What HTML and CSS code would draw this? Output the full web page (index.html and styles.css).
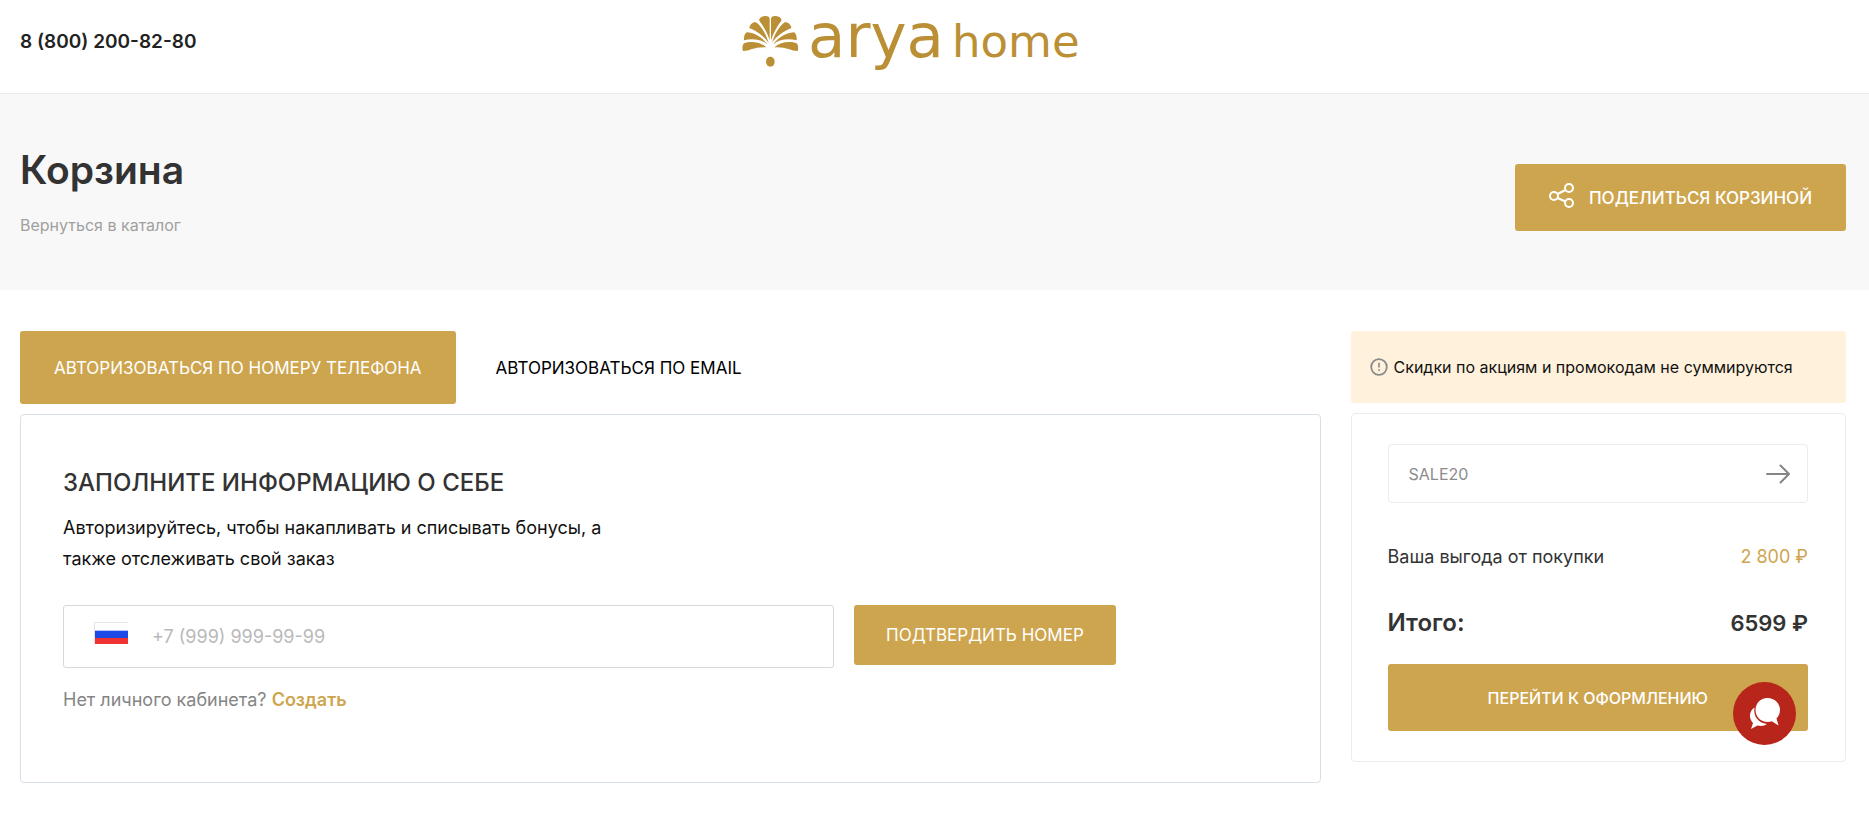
FILE: index.html
```html
<!DOCTYPE html>
<html lang="ru">
<head>
<meta charset="utf-8">
<meta name="viewport" content="width=device-width, initial-scale=1">
<title>Корзина — Arya Home</title>
<link rel="stylesheet" href="styles.css">
</head>
<body>
<header class="header">
  <a class="phone" href="tel:88002008280">8 (800) 200-82-80</a>
  <a class="logo" href="#" aria-label="arya home">
    <svg width="344" height="72" viewBox="0 -14 344 72" fill="#bb8f35">
      <defs>
        <g id="petals">
          <path d="M104 106V41C103 33 93 32 86 34C76 36 71 42 73 47C84 62 97 82 104 106Z"/>
          <path d="M101 113C94 90 80 64 63 52C54 50 44 58 43 69C66 78 87 94 101 113Z"/>
          <path d="M98 119C84 99 62 84 35 82C28 86 26 98 27 106C54 99 82 104 98 119Z"/>
          <path d="M94 127C76 110 46 107 27 115C22 120 21 132 24 138C46 138 56 125 94 127Z"/>
        </g>
      </defs>
      <g transform="translate(-6 -9) scale(.3333)">
        <use href="#petals"/>
        <use href="#petals" transform="translate(212 0) scale(-1 1)"/>
        <ellipse cx="106" cy="170" rx="13" ry="15"/>
      </g>
      <text class="logo-arya" x="67" y="43">arya</text>
      <text class="logo-home" x="211" y="43">home</text>
    </svg>
  </a>
</header>

<section class="hero">
  <div>
    <h1 class="title">Корзина</h1>
    <a class="back" href="#">Вернуться в каталог</a>
  </div>
  <button class="btn share" type="button">
    <svg class="share-icon" width="26" height="26" viewBox="0 0 26 26" fill="none" stroke="#fff" stroke-width="2">
      <circle cx="5" cy="13" r="4"/><circle cx="20" cy="5" r="4"/><circle cx="20" cy="20" r="4"/>
      <path d="M8.500 11L16.500 7M8.500 15L16.500 18.500"/>
    </svg>
    Поделиться корзиной
  </button>
</section>

<main class="content">
  <section>
    <div class="tabs">
      <button class="tab tab-active" type="button">Авторизоваться по номеру телефона</button>
      <button class="tab" type="button">Авторизоваться по email</button>
    </div>
    <form class="card login">
      <h2 class="subtitle">Заполните информацию о себе</h2>
      <p class="lead">Авторизируйтесь, чтобы накапливать и списывать бонусы, а также отслеживать свой заказ</p>
      <div class="row">
        <label class="field">
          <svg class="flag" width="34" height="22" viewBox="0 0 34 22">
            <path fill="#e4e4e4" d="M0 0h34v1H1v21H0z"/>
            <path fill="#fff" d="M1 1h33v7H1z"/>
            <path fill="#b9c3f5" d="M1 8h33v1H1z"/>
            <path fill="#1d49e6" d="M1 9h33v7H1z"/>
            <path fill="#ef3333" d="M1 16h33v6H1z"/>
          </svg>
          <input class="input phone-input" type="tel" placeholder="+7 (999) 999-99-99" aria-label="Номер телефона">
        </label>
        <button class="btn confirm" type="button">Подтвердить номер</button>
      </div>
      <p class="note">Нет личного кабинета? <a class="create" href="#">Создать</a></p>
    </form>
  </section>

  <aside>
    <div class="notice">
      <svg width="18" height="18" viewBox="0 0 18 18" fill="none" stroke="#8a8a8a">
        <circle cx="9" cy="9" r="7.800" stroke-width="1.800"/>
        <path stroke-width="1.600" d="M9 4.800v4.800M9 11.200v1.700"/>
      </svg>
      Скидки по акциям и промокодам не суммируются
    </div>
    <form class="card summary">
      <div class="promo">
        <input class="input promo-input" type="text" placeholder="SALE20" aria-label="Промокод">
        <button class="apply" type="button" aria-label="Применить промокод">
          <svg width="24" height="20" viewBox="0 0 24 20" fill="none" stroke="#858585" stroke-width="2" stroke-linecap="round" stroke-linejoin="round">
            <path d="M1 10H23M14.500 1.500L23 10L14.500 18.500"/>
          </svg>
        </button>
      </div>
      <div class="line"><span>Ваша выгода от покупки</span><span class="gain">2 800 ₽</span></div>
      <div class="line total"><span>Итого:</span><span class="total-sum">6599 ₽</span></div>
      <button class="btn checkout" type="button">Перейти к оформлению</button>
    </form>
  </aside>
</main>

<button class="chat" type="button" aria-label="Открыть чат">
  <svg width="32" height="32" viewBox="0 0 32 32" fill="#fff">
    <path d="M5.500 9.500C0 13 -.5 20.500 4 25L2 31L8.500 27.500C12 28.500 15.500 28 18 26C9 25 4 18 5.500 9.500Z"/>
    <path d="M18.500 0C11.500 0 6.500 5.500 6.500 12C6.500 19 12 24 18.500 24C20 24 21.500 23.800 22.800 23.300L29.500 27.500L27.500 20.500C29.500 18.500 31 15.500 31 12C31 5.500 25.500 0 18.500 0Z"/>
  </svg>
</button>
</body>
</html>
```
FILE: styles.css
```css
* {
  box-sizing: border-box;
}

body {
  margin: 0;
  font-family: Inter, "Noto Sans", sans-serif;
  font-size: 18px;
  color: #333;
  background: #fff;
}

a {
  color: inherit;
  text-decoration: none;
}

button,
input {
  font-family: inherit;
}

button {
  border: 0;
  cursor: pointer;
}

svg {
  display: block;
  flex: none;
  overflow: visible;
}

h1,
h2,
p {
  margin: 0;
}

.header {
  display: grid;
  grid-template-columns: 1fr auto 1fr;
  align-items: start;
  padding: 0 63px 21px 20px;
  border-bottom: 1px solid #e9e9e9;
}

.phone {
  padding-top: 30px;
  font-size: 19px;
  line-height: 24px;
  font-weight: 600;
  color: #222;
}

.logo {
  font-family: "DejaVu Sans", sans-serif;
}

.logo-arya {
  font-size: 61px;
}

.logo-home {
  font-size: 45px;
}

.hero {
  display: flex;
  justify-content: space-between;
  align-items: flex-start;
  padding: 50px 23px 52px 20px;
  background: #f8f8f8;
}

.title {
  font-size: 39px;
  line-height: 52px;
  font-weight: 600;
}

.back {
  display: block;
  margin-top: 16px;
  font-size: 16px;
  line-height: 26px;
  color: #a0a0a0;
}

.btn {
  display: flex;
  align-items: center;
  justify-content: center;
  border-radius: 3px;
  color: #fff;
  background: #cea54f;
  text-transform: uppercase;
}

.share {
  gap: 14px;
  height: 67px;
  margin-top: 20px;
  padding: 0 34px;
  font-size: 17px;
  font-weight: 500;
}

.share-icon {
  margin-bottom: 4px;
}

.content {
  display: grid;
  grid-template-columns: 21fr 8fr;
  gap: 30px;
  align-items: start;
  padding: 41px 23px 36px 20px;
}

.tabs {
  display: flex;
  gap: 6px;
  margin-bottom: 10px;
}

.tab {
  height: 73px;
  padding: 0 34px;
  border-radius: 3px;
  font-size: 17px;
  color: #000;
  background: none;
  text-transform: uppercase;
}

.tab-active {
  color: #fff;
  background: #cea54f;
}

.card {
  border: 1px solid #d8dfe6;
  border-radius: 4px;
}

.login {
  padding: 50px 42px 67px;
}

.subtitle {
  font-size: 24px;
  line-height: 36px;
  font-weight: 500;
  text-transform: uppercase;
}

.lead {
  max-width: 560px;
  margin-top: 11px;
  font-size: 18px;
  line-height: 31px;
  color: #111;
}

.row {
  display: flex;
  align-items: flex-start;
  gap: 20px;
  margin-top: 31px;
}

.field {
  display: flex;
  align-items: center;
  flex: 0 1 771px;
  height: 63px;
  padding: 0 30px;
  border: 1px solid #d8d8d8;
  border-radius: 3px;
}

.flag {
  margin-bottom: 8px;
}

.input {
  flex: 1;
  min-width: 0;
  padding: 0;
  border: 0;
  outline: 0;
  background: none;
  color: #333;
}

.phone-input {
  padding-left: 24px;
  font-size: 18px;
}

.phone-input::placeholder {
  color: #b9b9b9;
}

.confirm {
  height: 60px;
  padding: 0 32px;
  font-size: 17px;
}

.note {
  margin-top: 16px;
  font-size: 18px;
  line-height: 31px;
  color: #858585;
}

.create {
  font-weight: 600;
  color: #cea54f;
}

.notice {
  display: flex;
  align-items: center;
  gap: 6px;
  height: 72px;
  margin-bottom: 10px;
  padding: 0 19px;
  border-radius: 3px;
  font-size: 16px;
  color: #111;
  background: #fff1db;
}

.summary {
  padding: 30px 37px 30px 36px;
  border-color: #ececec;
}

.promo {
  display: flex;
  align-items: center;
  height: 59px;
  padding: 0 17px 0 20px;
  border: 1px solid #ececec;
  border-radius: 4px;
}

.promo-input {
  font-size: 16px;
}

.promo-input::placeholder {
  color: #8c8c8c;
}

.apply {
  padding: 0;
  background: none;
}

.line {
  display: flex;
  justify-content: space-between;
  margin-top: 38px;
  font-size: 18px;
  line-height: 32px;
}

.gain {
  color: #cea54f;
}

.total {
  margin-top: 34px;
  font-size: 24px;
  font-weight: 600;
}

.total-sum {
  font-size: 22px;
}

.checkout {
  width: 100%;
  height: 67px;
  margin-top: 25px;
  font-size: 16px;
  font-weight: 500;
}

.chat {
  position: fixed;
  right: 73px;
  bottom: 75px;
  display: grid;
  place-items: center;
  width: 63px;
  height: 63px;
  padding: 0;
  border-radius: 50%;
  background: #b8251a;
}
```
